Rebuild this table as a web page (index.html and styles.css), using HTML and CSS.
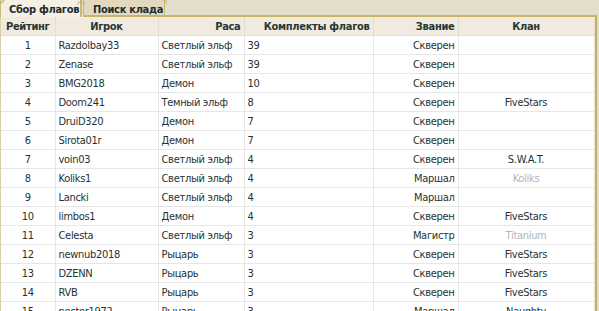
FILE: index.html
```html
<!DOCTYPE html>
<html lang="ru">
<head>
<meta charset="utf-8">
<title>Сбор флагов</title>
<link rel="stylesheet" href="styles.css">
</head>
<body>
<div class="tabs">
  <div class="tab active">Сбор флагов
    <svg class="orn orn-l" width="5" height="5" viewBox="0 0 5 5"><path d="M0 4 Q0 0 4 0 M1.5 1.5 L3 3" stroke="#c9b56a" stroke-width="1" fill="none"/></svg>
    <svg class="orn orn-r" width="8" height="6" viewBox="0 0 8 6"><path d="M0 5 Q1 1 4 2 Q7 1 8 5 M4 2 L4 0" stroke="#c9b56a" stroke-width="1" fill="none"/></svg>
  </div>
  <div class="tab">Поиск клада
    <svg class="orn orn-r2" width="5" height="5" viewBox="0 0 5 5"><path d="M5 4 Q5 0 1 0 M3.5 1.5 L2 3" stroke="#c9b56a" stroke-width="1" fill="none"/></svg>
  </div>
  <div class="tabfill"></div>
</div>
<div class="panel">
<table class="grid">
  <colgroup>
    <col class="c1"><col class="c2"><col class="c3"><col class="c4"><col class="c5"><col class="c6">
  </colgroup>
  <thead>
    <tr>
      <th class="ac">Рейтинг</th>
      <th class="ac">Игрок</th>
      <th class="ar">Раса</th>
      <th class="ar">Комплекты флагов</th>
      <th class="ar">Звание</th>
      <th class="ac">Клан</th>
    </tr>
  </thead>
  <tbody>
    <tr><td class="ac">1</td><td>Razdolbay33</td><td>Светлый эльф</td><td>39</td><td class="ar">Скверен</td><td class="ac"></td></tr>
    <tr><td class="ac">2</td><td>Zenase</td><td>Светлый эльф</td><td>39</td><td class="ar">Скверен</td><td class="ac"></td></tr>
    <tr><td class="ac">3</td><td>BMG2018</td><td>Демон</td><td>10</td><td class="ar">Скверен</td><td class="ac"></td></tr>
    <tr><td class="ac">4</td><td>Doom241</td><td>Темный эльф</td><td>8</td><td class="ar">Скверен</td><td class="ac">FiveStars</td></tr>
    <tr><td class="ac">5</td><td>DruiD320</td><td>Демон</td><td>7</td><td class="ar">Скверен</td><td class="ac"></td></tr>
    <tr><td class="ac">6</td><td>Sirota01r</td><td>Демон</td><td>7</td><td class="ar">Скверен</td><td class="ac"></td></tr>
    <tr><td class="ac">7</td><td>voin03</td><td>Светлый эльф</td><td>4</td><td class="ar">Скверен</td><td class="ac">S.W.A.T.</td></tr>
    <tr><td class="ac">8</td><td>Koliks1</td><td>Светлый эльф</td><td>4</td><td class="ar">Маршал</td><td class="ac muted">Koliks</td></tr>
    <tr><td class="ac">9</td><td>Lancki</td><td>Светлый эльф</td><td>4</td><td class="ar">Маршал</td><td class="ac"></td></tr>
    <tr><td class="ac">10</td><td>limbos1</td><td>Демон</td><td>4</td><td class="ar">Скверен</td><td class="ac">FiveStars</td></tr>
    <tr><td class="ac">11</td><td>Celesta</td><td>Светлый эльф</td><td>3</td><td class="ar">Магистр</td><td class="ac muted">Titanium</td></tr>
    <tr><td class="ac">12</td><td>newnub2018</td><td>Рыцарь</td><td>3</td><td class="ar">Скверен</td><td class="ac">FiveStars</td></tr>
    <tr><td class="ac">13</td><td>DZENN</td><td>Рыцарь</td><td>3</td><td class="ar">Скверен</td><td class="ac">FiveStars</td></tr>
    <tr><td class="ac">14</td><td>RVB</td><td>Рыцарь</td><td>3</td><td class="ar">Скверен</td><td class="ac">FiveStars</td></tr>
    <tr><td class="ac">15</td><td>nector1972</td><td>Рыцарь</td><td>3</td><td class="ar">Маршал</td><td class="ac">Naughty</td></tr>
  </tbody>
</table>
</div>
</body>
</html>
```
FILE: styles.css
```css
html, body {
  margin: 0;
  padding: 0;
}
body {
  width: 599px;
  height: 311px;
  overflow: hidden;
  background: #e4ddcc;
  font-family: "DejaVu Sans Condensed", "DejaVu Sans", sans-serif;
  font-size: 11px;
  letter-spacing: -0.3px;
  color: #1f3333;
}
.tabs {
  display: flex;
  height: 17px;
  align-items: stretch;
}
.tab {
  position: relative;
  box-sizing: border-box;
  width: 82px;
  padding: 3px 0 0 9px;
  font-weight: bold;
  color: #1d2d2d;
  background: #e3d9bf;
  border-left: 1px solid #cbb874;
  border-right: 1px solid #cbb874;
  border-bottom: 2px solid #c9b56a;
  margin-left: 1px;
  white-space: nowrap;
}
.tab.active {
  width: 82px;
  margin-left: 0;
  background: #f4f0e3;
  border-bottom: none;
  border-right: 2px solid #cbb874;
  padding-left: 8px;
}
.tabfill {
  flex: 1;
  border-bottom: 2px solid #c9b56a;
  margin-right: 2px;
}
.orn {
  position: absolute;
  top: 0;
}
.orn-l { left: 0; }
.orn-r { right: -5px; }
.orn-r2 { right: -3px; }
.panel {
  box-sizing: border-box;
  width: 597px;
  border-left: 1px solid #d9cfa8;
  border-right: 3px solid #c2ae63;
  background: #ffffff;
  padding-top: 2px;
  margin-top: -2px;
}
.tab.active { z-index: 1; }
.grid {
  width: 593px;
  table-layout: fixed;
  border-collapse: collapse;
  border-spacing: 0;
  border-right: 1px solid #e8e3d3;
}
.c1 { width: 54px; }
.c2 { width: 103px; }
.c3 { width: 86px; }
.c4 { width: 129px; }
.c5 { width: 85px; }
.c6 { width: 136px; }
.grid th, .grid td {
  height: 18px;
  padding: 0 3px;
  border-right: 1px solid #e6e6e6;
  border-bottom: 1px solid #e6e6e6;
  white-space: nowrap;
  overflow: hidden;
  text-align: left;
  vertical-align: middle;
}
.grid th {
  background: #f0ebde;
  font-weight: bold;
  color: #263838;
  border-bottom-color: #e3ddcc;
  border-right-color: #e3ddcc;
}
.grid tr > :last-child { border-right: none; }
.grid .ac { text-align: center; }
.grid .ar { text-align: right; }
.grid .muted { color: #b4b4b4; }
```
